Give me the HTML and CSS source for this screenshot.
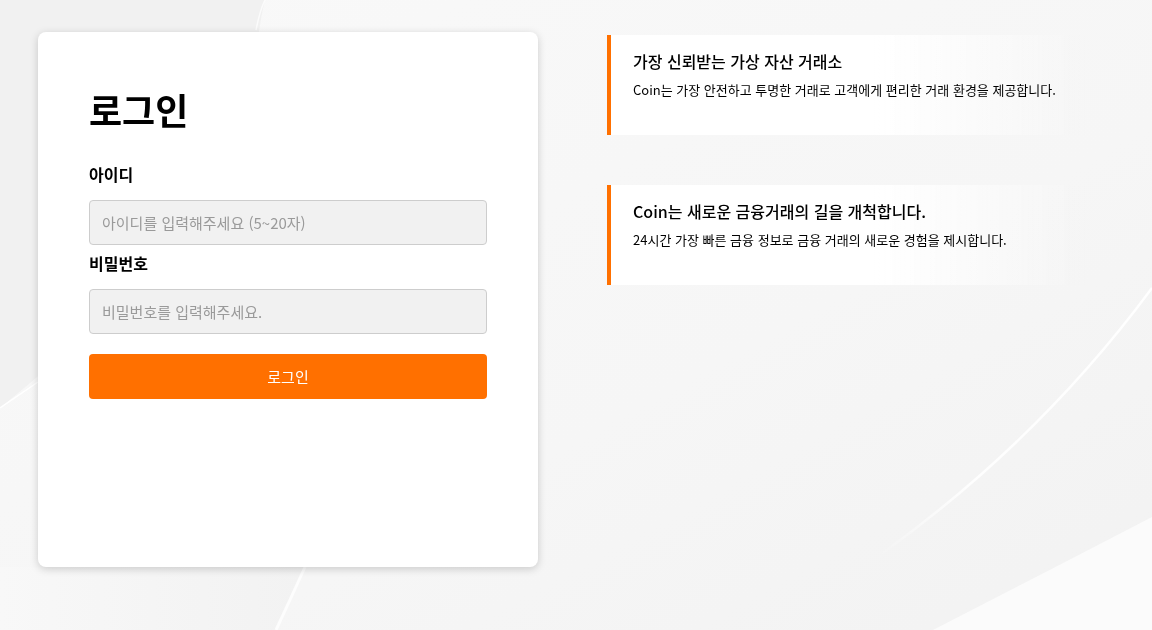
FILE: index.html
```html
<!DOCTYPE html>
<html lang="ko">

<head>
  <meta charset="UTF-8">
  <meta name="viewport" content="width=device-width, initial-scale=1.0">
  <title>로그인</title>
  <link rel="stylesheet" href="styles.css">
</head>

<body>
  <svg class="bg" viewBox="0 0 1152 630" preserveAspectRatio="none" aria-hidden="true">
    <defs>
      <linearGradient id="g-base" x1="0" y1="0" x2="1" y2="1">
        <stop offset="0" stop-color="#f9f9f9" />
        <stop offset="0.6" stop-color="#f6f6f6" />
        <stop offset="1" stop-color="#f2f2f2" />
      </linearGradient>
      <linearGradient id="g-low" x1="0" y1="0" x2="1" y2="0">
        <stop offset="0" stop-color="#f8f8f8" />
        <stop offset="1" stop-color="#f2f2f2" />
      </linearGradient>
      <linearGradient id="g-line" x1="1152" y1="288" x2="880" y2="560" gradientUnits="userSpaceOnUse">
        <stop offset="0" stop-color="#fff" stop-opacity="1" />
        <stop offset="0.7" stop-color="#fff" stop-opacity="0.9" />
        <stop offset="1" stop-color="#fff" stop-opacity="0" />
      </linearGradient>
    </defs>
    <rect width="1152" height="630" fill="url(#g-base)" />
    <path d="M0 0 L265 0 C255 40 250 110 250 200 L0 408 Z" fill="#f1f1f1" />
    <path d="M265 0 C260 10 258 20 256 30" stroke="#fff" stroke-width="1.5" stroke-opacity="0.7" fill="none" />
    <path d="M0 408 L38 382" stroke="#fff" stroke-width="1.5" fill="none" />
    <path d="M0 567 L305 567 Q290 600 276 630 L0 630 Z" fill="url(#g-low)" />
    <path d="M305 567 Q290 600 276 630" stroke="#fff" stroke-width="3" stroke-opacity="0.8" fill="none" />
    <path d="M1152 288 Q1040 440 880 555" stroke="url(#g-line)" stroke-width="2.5" fill="none" />
    <path d="M1152 517 Q1050 570 933 630 L1152 630 Z" fill="#fbfbfb" />
  </svg>

  <div class="page">
    <div class="login-card">
      <h1 class="login-title">로그인</h1>
      <form class="login-form">
        <label class="field-label" for="userId">아이디</label>
        <input class="field-input" id="userId" type="text" placeholder="아이디를 입력해주세요 (5~20자)">
        <label class="field-label" for="userPw">비밀번호</label>
        <input class="field-input" id="userPw" type="password" placeholder="비밀번호를 입력해주세요.">
        <button class="login-btn" type="button">로그인</button>
      </form>
    </div>

    <div class="intro">
      <div class="intro-item">
        <h3>가장 신뢰받는 가상 자산 거래소</h3>
        <p>Coin는 가장 안전하고 투명한 거래로 고객에게 편리한 거래 환경을 제공합니다.</p>
      </div>
      <div class="intro-item">
        <h3>Coin는 새로운 금융거래의 길을 개척합니다.</h3>
        <p>24시간 가장 빠른 금융 정보로 금융 거래의 새로운 경험을 제시합니다.</p>
      </div>
    </div>
  </div>
</body>

</html>
```

FILE: styles.css
```css
* {
  box-sizing: border-box;
}

body {
  margin: 0;
  min-height: 630px;
  font-family: "Noto Sans CJK KR", "Noto Sans", sans-serif;
  color: #000;
  background-color: #f5f5f5;
}

.bg {
  position: fixed;
  top: 0;
  left: 0;
  width: 100%;
  height: 100%;
  z-index: -1;
}

.page {
  display: flex;
  align-items: flex-start;
  gap: 69px;
  padding: 32px 0 0 38px;
}

.login-card {
  width: 500px;
  height: 535px;
  padding: 54px 51px 0;
  background-color: #fff;
  border-radius: 8px;
  box-shadow: 0 2px 8px rgba(0, 0, 0, 0.18);
}

.login-title {
  margin: 0 0 30px;
  font-size: 36px;
  line-height: 46px;
  font-weight: 700;
}

.login-form {
  display: flex;
  flex-direction: column;
}

.field-label {
  font-size: 16px;
  line-height: 24px;
  font-weight: 700;
  margin-bottom: 14px;
}

.field-input {
  width: 398px;
  height: 45px;
  padding: 0 12px;
  margin-bottom: 6px;
  font-family: inherit;
  font-size: 15px;
  background-color: #f1f1f1;
  border: 1px solid #cdcdcd;
  border-radius: 4px;
  outline: none;
}

.field-input::placeholder {
  color: #9a9a9a;
}

.field-input + .login-btn {
  margin-top: 14px;
}

.login-btn {
  width: 398px;
  height: 45px;
  font-family: inherit;
  font-size: 15px;
  color: #fff;
  background-color: #ff7000;
  border: 0;
  border-radius: 4px;
  cursor: pointer;
}

.intro {
  display: flex;
  flex-direction: column;
  gap: 50px;
  padding-top: 3px;
}

.intro-item {
  width: 478px;
  height: 100px;
  padding: 14px 0 0 22px;
  border-left: 4px solid #ff7000;
  background: linear-gradient(to right, #fff 55%, rgba(255, 255, 255, 0));
}

.intro-item h3 {
  margin: 0 0 6px;
  font-size: 16px;
  line-height: 25px;
  font-weight: 500;
}

.intro-item p {
  margin: 0;
  font-size: 13px;
  line-height: 20px;
}
```
